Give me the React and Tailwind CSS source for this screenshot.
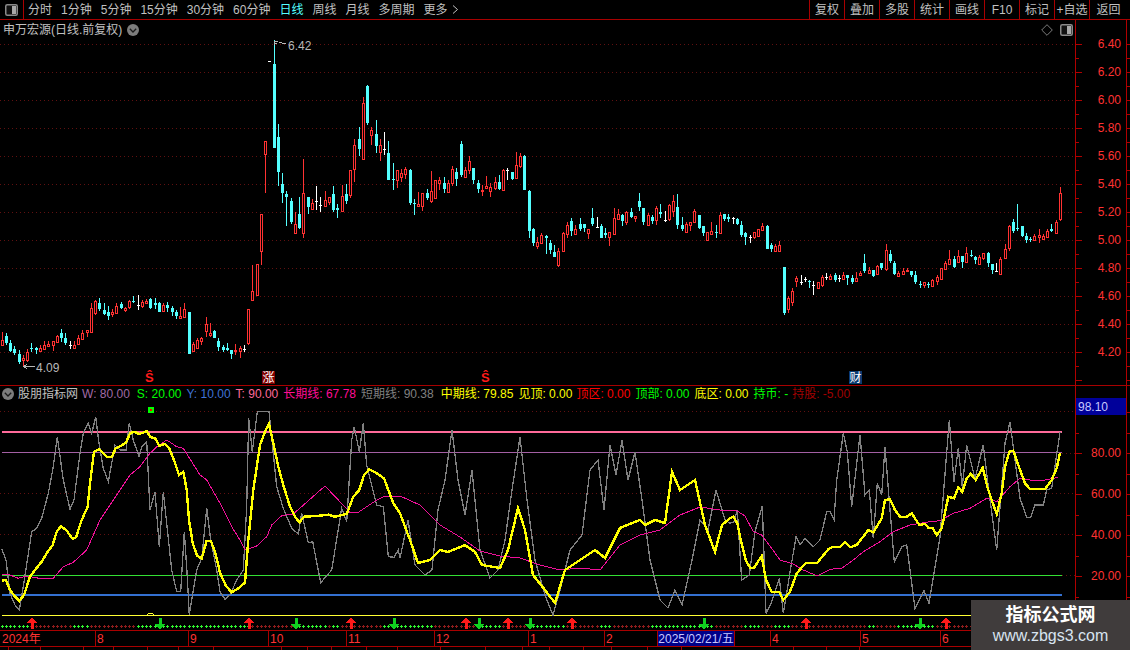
import React from "react";

const C = [
[340,345,332,345,0],[336,343,333,345,1],[343,351,340,352,1],[349,353,346,355,1],[354,362,350,364,1],[358,360,355,366,0],[352,360,349,362,0],[348,349,343,352,1],[348,350,347,354,1],[348,351,345,351,0],
[345,349,341,350,0],[344,346,341,346,0],[341,345,341,351,0],[336,342,335,343,0],[333,338,329,342,1],[338,343,333,345,1],[345,345,341,349,2],[345,348,341,348,0],[338,344,335,344,0],[333,339,330,339,0],
[330,332,330,337,0],[308,332,303,332,0],[301,313,300,315,0],[303,309,298,311,1],[310,314,303,315,1],[312,316,306,320,1],[312,314,309,317,0],[306,313,303,313,0],[304,308,302,309,1],[308,310,307,312,0],
[301,307,300,309,0],[301,302,296,303,1],[305,305,295,310,2],[302,306,300,308,0],[301,303,299,303,0],[299,308,298,309,1],[303,305,298,309,1],[303,312,302,312,1],[305,311,303,312,0],[305,308,302,312,1],
[308,312,306,316,1],[312,316,310,319,1],[316,318,307,318,0],[309,317,303,317,0],[312,354,312,354,1],[344,351,342,351,0],[340,348,338,348,0],[338,341,337,345,0],[324,331,317,337,0],[333,335,323,337,0],
[331,338,330,338,1],[341,347,338,351,1],[347,350,345,352,1],[348,350,343,351,1],[350,354,350,359,1],[350,351,344,355,0],[348,351,346,358,0],[349,349,345,352,2],[309,343,309,345,0],[291,300,265,300,0],
[264,295,264,296,0],[214,251,214,265,0],[141,154,141,193,0],[61,61,61,61,2],[64,148,40,148,1],[137,172,124,186,1],[184,193,173,203,1],[194,197,191,226,1],[201,222,198,224,1],[224,233,212,233,0],
[214,228,197,229,1],[193,233,159,238,0],[197,207,197,214,1],[203,209,199,210,0],[201,201,186,210,2],[205,205,197,212,2],[200,206,191,207,0],[197,202,197,205,0],[194,210,186,212,1],[208,210,204,218,1],
[196,211,185,211,0],[194,201,184,204,1],[170,195,170,198,0],[145,169,139,182,0],[139,149,127,156,1],[103,159,97,159,0],[86,123,85,125,1],[130,135,127,145,0],[134,146,120,153,1],[145,152,139,161,0],
[149,149,132,155,2],[153,180,141,180,1],[179,179,163,190,1],[170,180,170,188,0],[173,177,169,182,0],[169,174,167,179,0],[170,203,169,205,1],[203,204,199,215,1],[204,206,192,207,0],[193,206,193,211,0],
[193,198,189,200,1],[191,201,171,203,0],[180,198,180,198,0],[180,183,177,190,0],[183,189,177,193,1],[183,192,180,192,0],[169,183,166,186,0],[172,179,168,186,1],[144,175,141,177,1],[170,177,167,177,0],
[161,170,156,174,0],[168,180,168,184,1],[183,189,180,193,1],[190,191,185,196,0],[186,188,176,189,0],[187,191,183,197,0],[182,188,177,190,0],[182,189,175,190,1],[170,190,169,190,0],[170,170,168,180,2],
[172,179,172,180,1],[165,178,152,178,0],[156,166,153,168,0],[156,190,155,190,1],[191,231,190,238,1],[229,243,228,246,1],[242,246,237,249,0],[235,243,233,243,0],[236,238,235,254,1],[243,250,240,254,1],
[252,257,245,257,1],[251,265,248,267,0],[233,251,232,252,0],[225,234,222,238,0],[221,231,218,236,1],[229,234,225,235,0],[224,229,218,231,1],[224,228,224,232,1],[229,233,229,239,0],[218,224,208,226,1],
[227,227,217,228,2],[226,238,224,238,1],[233,235,228,238,1],[232,237,232,246,0],[218,234,208,235,0],[214,219,209,219,0],[215,221,214,226,1],[212,222,211,225,0],[212,217,208,218,1],[216,218,216,222,0],
[201,207,193,211,1],[208,222,208,225,1],[215,225,213,226,0],[217,221,215,224,1],[208,220,206,225,0],[212,214,204,218,1],[220,220,211,222,2],[205,219,204,221,0],[201,211,195,217,0],[207,225,194,229,1],
[225,229,217,231,1],[224,232,222,232,0],[222,225,222,231,0],[211,222,209,223,0],[215,228,215,229,1],[226,233,226,236,1],[232,240,232,240,0],[231,234,222,235,0],[232,232,225,238,1],[215,233,212,233,0],
[214,219,214,221,1],[217,219,214,222,1],[218,218,217,224,2],[219,224,218,225,1],[225,235,221,237,1],[233,237,232,245,1],[237,237,235,243,2],[232,237,232,239,0],[229,236,229,237,0],[226,230,223,230,0],
[226,249,225,249,1],[245,249,243,252,1],[246,251,244,251,0],[245,251,241,252,0],[267,313,267,315,1],[298,309,296,313,0],[291,302,288,306,0],[278,281,276,287,0],[282,282,275,285,2],[279,279,277,282,2],
[281,281,280,288,1],[285,285,281,295,2],[282,288,282,288,0],[277,285,275,287,0],[277,277,273,280,2],[276,279,274,279,0],[275,280,273,282,1],[278,278,275,282,2],[275,279,272,279,0],[275,278,275,285,1],
[278,282,275,284,1],[278,281,272,281,0],[273,275,271,275,0],[263,271,254,273,1],[270,273,267,274,0],[270,276,270,277,1],[266,274,265,275,0],[263,268,263,270,1],[250,269,244,271,0],[254,261,250,263,1],
[263,274,261,275,1],[273,276,271,276,0],[271,274,268,274,0],[270,271,268,272,0],[271,275,271,277,1],[275,282,271,284,1],[284,284,281,288,1],[282,285,282,288,0],[284,285,282,288,1],[280,286,279,287,0],
[277,281,275,285,0],[268,279,268,280,0],[263,269,261,270,0],[259,264,250,264,0],[259,267,256,268,1],[256,262,250,263,0],[256,262,256,268,1],[253,262,247,262,0],[255,256,250,257,1],[257,260,256,264,1],
[257,264,255,264,0],[253,258,253,260,0],[253,263,252,267,1],[264,270,264,274,1],[271,271,263,271,2],[259,274,257,274,0],[249,258,244,259,0],[226,248,225,251,0],[222,231,219,233,1],[228,229,204,231,1],
[226,236,226,237,1],[236,240,233,243,1],[239,240,237,242,1],[236,240,234,240,0],[235,237,229,243,0],[236,239,234,239,0],[231,237,229,237,0],[229,231,224,232,1],[222,233,220,233,0],[193,219,187,221,0],
];
const cx = (i) => 2 + Math.floor(4.25 * i);
const RED = "#ff3232", CY = "#54ffff";

function Candle({ d, i }) {
  const [t, b, h, l, k] = d;
  const x = cx(i);
  if (k === 2) return <g fill="#ffffff"><rect x={x} y={h} width="1" height={Math.max(1, l - h)} /><rect x={x - 1} y={t} width="3" height="1" /></g>;
  if (k === 1) return <g fill={CY}><rect x={x} y={h} width="1" height={Math.max(1, l - h)} /><rect x={x - 1} y={t} width="3" height={Math.max(1, b - t)} /></g>;
  return (
    <g>
      <rect x={x} y={h} width="1" height={Math.max(0, t - h)} fill={RED} />
      <rect x={x} y={b} width="1" height={Math.max(0, l - b)} fill={RED} />
      <rect x={x - 0.5} y={t + 0.5} width="2" height={Math.max(1, b - t)} fill="#000" stroke={RED} strokeWidth="1" />
    </g>
  );
}

const z10 = (a) => a.map(([x, y]) => [x / 3, 410 + y / 3]);
const z11 = (a) => a.map(([x, y]) => [730 + x / 3, 400 + y / 3]);
const yellow = [
  ...z10([[6,512],[18,510],[30,540],[45,560],[58,573],[72,555],[90,500],[105,480],[125,455],[140,430],[158,405],[170,365],[183,348],[200,362],[218,387],[228,382],[245,330],[263,290],[270,220],[282,125],[298,118],[322,141],[335,141],[347,115],[362,108],[378,98],[390,70],[402,65],[418,72],[440,64],[452,82],[465,84],[478,107],[495,102],[508,115],[522,150],[537,195],[550,185],[560,240],[567,330],[578,400],[592,438],[605,445],[620,392],[632,392],[645,425],[660,488],[678,528],[695,547],[715,535],[735,518],[745,390],[760,240],[780,105],[795,65],[807,42],[820,100],[835,170],[850,225],[870,290],[885,320],[898,337],[912,320],[950,318],[985,314],[1005,320],[1040,312],[1060,260],[1078,240],[1092,195],[1108,178],[1130,190],[1152,205],[1165,240],[1180,280],[1200,310]]),
  [410,540],[418,563],[430,560],[440,550],[448,552],[465,545],[475,552],[482,565],[500,568],[508,550],[518,508],[525,530],[533,575],[545,590],[555,603],[565,570],[580,560],[595,550],[605,558],[620,528],[640,520],[645,525],[655,520],[665,523],[672,472],[680,490],[695,480],[705,525],[715,552],[722,525],
  ...z11([[0,355],[10,350],[22,370],[32,420],[47,480],[60,503],[72,503],[95,468],[108,540],[125,575],[147,575],[160,600],[180,575],[200,520],[228,488],[262,488],[295,448],[308,440],[330,440],[345,427],[360,442],[380,435],[415,390],[430,397],[455,355],[465,300],[480,298],[495,330],[510,350],[530,350],[545,340],[568,375],[585,372],[595,383],[607,383],[620,405],[635,385],[655,290],[672,295],[685,262],[697,275],[710,235],[722,222],[737,240],[758,203],[772,260],[785,300],[800,342],[815,280],[825,200],[838,155],[850,152],[865,195],[885,250],[900,267],[945,267],[965,240],[980,205],[990,158]]),
];
const pink = [
  ...z10([[6,493],[30,495],[55,505],[80,498],[100,502],[130,507],[160,505],[190,470],[220,457],[260,420],[300,330],[340,270],[390,195],[420,170],[450,130],[470,110],[500,90],[530,110],[550,115],[600,195],[620,210],[660,280],[695,350],[720,390],[735,420],[770,408],[800,380],[815,345],[845,317],[880,312],[975,228],[1010,265],[1050,307],[1075,307],[1130,270],[1155,258],[1200,258]]),
  [420,505],[440,525],[460,537],[480,551],[500,556],[520,558],[540,565],[560,570],[580,568],[600,570],[620,545],[640,535],[660,530],[680,515],[700,507],[720,510],
  ...z11([[0,330],[20,332],[45,348],[70,395],[95,405],[125,445],[150,480],[190,492],[220,510],[262,528],[300,508],[335,505],[370,480],[400,455],[450,425],[490,395],[540,375],[600,365],[630,362],[670,340],[720,325],[770,295],[800,305],[840,260],[870,235],[900,240],[945,240],[985,232]]),
];
const gray = [
  ...z10([[6,418],[18,450],[30,550],[45,585],[58,600],[70,530],[95,365],[110,355],[125,325],[145,250],[160,170],[172,80],[190,210],[210,298],[222,270],[240,130],[250,70],[265,40],[275,70],[287,22],[297,100],[310,175],[325,215],[345,105],[360,120],[378,120],[388,40],[400,90],[417,140],[425,110],[440,95],[450,300],[465,245],[478,410],[490,245],[515,480],[530,545],[542,545],[553,365],[562,500],[568,615],[575,570],[590,480],[605,445],[620,295],[632,390],[650,480],[660,545],[675,568],[690,555],[710,510],[730,480],[740,290],[746,25],[757,125],[772,5],[807,5],[820,130],[830,230],[850,295],[875,355],[895,372],[905,310],[925,398],[938,395],[962,518],[995,480],[1025,295],[1040,335],[1055,90],[1063,50],[1078,125],[1090,40],[1100,165],[1130,285],[1150,290],[1165,440],[1182,442],[1195,420],[1200,445]]),
  [408,520],[415,565],[425,575],[432,570],[438,510],[445,480],[452,430],[458,480],[465,515],[472,470],[480,550],[490,578],[498,570],[505,540],[512,490],[520,437],[527,500],[535,560],[545,595],[553,615],[560,590],[570,550],[582,535],[590,470],[598,460],[604,510],[610,445],[616,475],[622,440],[628,480],[635,452],[642,500],[650,560],[660,600],[668,608],[675,590],[682,605],[692,560],[700,520],[708,530],[716,490],[725,520],
  ...z11([[0,370],[12,365],[22,330],[35,540],[58,525],[75,395],[97,318],[108,640],[125,605],[148,535],[160,640],[178,530],[198,410],[210,435],[225,415],[250,440],[270,420],[290,335],[300,335],[312,360],[320,240],[340,100],[352,155],[365,320],[390,105],[405,285],[418,270],[430,415],[442,250],[455,285],[465,140],[480,330],[493,485],[515,440],[530,435],[555,625],[582,572],[597,610],[630,410],[658,60],[672,245],[685,145],[697,260],[710,135],[735,235],[760,135],[775,260],[800,450],[825,130],[840,65],[870,295],[890,352],[902,352],[915,315],[940,315],[950,270],[965,265],[990,97]]),
];
const toPts = (a) => a.map(([x, y]) => `${x.toFixed(1)},${y.toFixed(1)}`).join(" ");

const greenRanges = [[0,30],[73,91],[137,249],[296,327],[332,339],[384,434],[479,500],[530,565],[600,611],[650,716],[745,762],[775,790],[865,875],[895,934],[1010,1062]];
const isGreen = (x) => greenRanges.some(([a, b]) => x >= a && x < b);
const upArrows = [32, 249, 351, 466, 508, 572, 806, 946];
const downArrows = [160, 296, 394, 479, 530, 704, 920];

const DOT = "#601010";
const range = (a, b, s) => { const r = []; for (let v = a; v <= b; v += s) r.push(v); return r; };

function MainChart() {
  return (
    <svg width="1075" height="346" viewBox="0 39 1075 346" className="block" shapeRendering="crispEdges">
      {range(44, 352, 28).map((y) => <line key={y} x1="0" x2="1075" y1={y + 0.5} y2={y + 0.5} stroke={DOT} strokeDasharray="1 3" />)}
      {C.map((d, i) => <Candle key={i} d={d} i={i} />)}
      <path d="M274.5 45V41.5H278M275 43.5H277M279 42.5L281 42L283 43.5L285.5 43" stroke="#b8b8b8" fill="none" />
      <path d="M35 366.5H24M27 364L24 366.5L27 369" stroke="#b8b8b8" fill="none" />
    </svg>
  );
}

function IndicatorChart() {
  return (
    <svg width="1075" height="228" viewBox="0 402 1075 228" className="block" shapeRendering="crispEdges">
      {[411, 493, 534].map((y) => <line key={y} x1="0" x2="1075" y1={y + 0.5} y2={y + 0.5} stroke={DOT} strokeDasharray="1 3" />)}
      {[453, 575].map((y) => <line key={y} x1="1062" x2="1075" y1={y + 0.5} y2={y + 0.5} stroke={DOT} strokeDasharray="1 3" />)}
      <rect x="2" y="431" width="1060" height="2" fill="#ff6a9a" />
      <rect x="2" y="452" width="1060" height="1" fill="#a45fa4" />
      <rect x="2" y="575" width="1060" height="1" fill="#33e033" />
      <rect x="2" y="594" width="1060" height="2" fill="#3470d0" />
      <rect x="2" y="615" width="1128" height="1" fill="#ffff33" />
      <polyline points={toPts(gray)} fill="none" stroke="#808080" strokeWidth="1.3" />
      <polyline points={toPts(pink)} fill="none" stroke="#f0109a" strokeWidth="1" />
      <polyline points={toPts(yellow)} fill="none" stroke="#ffff00" strokeWidth="2.4" />
      <rect x="148" y="407" width="6" height="6" fill="#00ff00" />
      <rect x="150" y="409" width="2" height="2" fill="#ff0000" />
      <path d="M147 615L149 613H152L154 615" fill="none" stroke="#ffff33" />
      {C.map((_, i) => {
        const x = cx(i);
        const g = isGreen(x);
        return <path key={i} d={`M${x - 1} 626.5H${x + 2}M${x} 625.5H${x + 1}M${x} 627.5H${x + 1}`} stroke={g ? "#30f030" : "#8e1c1c"} />;
      })}
      {upArrows.map((x) => <path key={x} d={`M${x - 5} 623L${x} 617L${x + 5} 623H${x + 2}V629H${x - 1}V623Z`} fill="#ff1a1a" />)}
      {downArrows.map((x) => <path key={x} d={`M${x - 1} 618H${x + 2}V624H${x + 5}L${x} 630L${x - 5} 624H${x - 1}Z`} fill="#10d020" />)}
    </svg>
  );
}

function PanelIcon({ className }) {
  return (
    <svg width="13" height="12" viewBox="0 0 13 12" className={className}>
      <rect x="0.75" y="0.75" width="11.5" height="10.5" rx="1.5" fill="#111" stroke="#8a8a8a" strokeWidth="1.5" />
      <rect x="7" y="2" width="4" height="8" fill="#a8a8a8" />
    </svg>
  );
}

function DownCircle({ className }) {
  return (
    <svg width="12" height="12" viewBox="0 0 12 12" className={className}>
      <circle cx="6" cy="6" r="6" fill="#7c7c7c" />
      <path d="M2.8 4.8L6 8L9.2 4.8" fill="none" stroke="#1a1a1a" strokeWidth="1.3" />
    </svg>
  );
}

const periods = [["分时"],["1分钟"],["5分钟"],["15分钟"],["30分钟"],["60分钟"],["日线",1],["周线"],["月线"],["多周期"],["更多"]];
const tools = ["复权","叠加","多股","统计","画线","F10","标记","+自选"];
const legend = [
  ["W: 80.00","text-[#a26aa6]"],["S: 20.00","ml-[2px] text-[#00ff00]"],["Y: 10.00","text-[#3f73d8]"],["T: 90.00","text-[#ff6a9a]"],
  ["长期线: 67.78","text-[#ff0d96]"],["短期线: 90.38","text-[#808080]"],["中期线: 79.85","ml-[2px] text-[#ffff00]"],["见顶: 0.00","text-[#ffff00]"],
  ["顶区: 0.00","-ml-[1px] text-[#ff0000]"],["顶部: 0.00","text-[#00ff00]"],["底区: 0.00","text-[#ffff00]"],["持币: -","text-[#00ff00]"],["持股: -5.00","-ml-[1px] text-[#a00000]"],
];
const priceLabels = ["6.40","6.20","6.00","5.80","5.60","5.40","5.20","5.00","4.80","4.60","4.40","4.20"];
const footerCuts = [42,73,115,144,177,207,241,308,333,356,390,420,462,506,542,568,601,628,663,696,807,839,871];

function AxisRuler({ height, top, step, majorEvery }) {
  const ys = range(top, height, step);
  return (
    <svg width="55" height={height} viewBox={`0 0 55 ${height}`} className="absolute left-0 top-0" shapeRendering="crispEdges">
      <rect x="0" y="0" width="1" height={height} fill="#b00000" />
      <rect x="51" y="0" width="1" height={height} fill="#b00000" />
      {ys.map((y, i) => (
        <g key={y} fill="#b00000">
          <rect x="1" y={y} width={i % majorEvery === 0 ? 6 : 3} height="1" />
          <rect x="52" y={y} width="3" height="1" />
        </g>
      ))}
    </svg>
  );
}

export default function App() {
  return (
    <div className="relative w-[1130px] h-[650px] overflow-hidden bg-black text-[12px] leading-none text-[#c0c0c0] font-['Liberation_Sans','Noto_Sans_CJK_SC',sans-serif]">
      {/* toolbar */}
      <div className="flex h-[20px] items-center border-b border-[#a80000]">
        <div className="flex h-full w-[24px] items-center justify-center border-r border-[#a80000]">
          <PanelIcon className="mr-[1px]" />
        </div>
        <div className="ml-[4px] flex items-center gap-[9px]">
          {periods.map(([t, on]) => (
            <span key={t} className={on ? "text-[#54ffff]" : ""}>{t}</span>
          ))}
          <svg width="7" height="9" viewBox="0 0 7 9" className="-ml-[5px]"><path d="M1 .5L5.5 4.5L1 8.5" fill="none" stroke="#c0c0c0" /></svg>
        </div>
        <div className="ml-auto flex h-full">
          {tools.map((t) => (
            <div key={t} className="flex h-full w-[35px] items-center justify-center border-l border-[#a80000]">{t}</div>
          ))}
          <div className="flex h-full w-[41px] items-center justify-center border-l border-[#a80000] pr-[3px]">返回</div>
        </div>
      </div>

      {/* price panel */}
      <div className="flex h-[366px] border-b border-[#a80000]">
        <div className="relative w-[1075px]">
          <div className="flex h-[19px] items-center pl-[3px]">
            <span>申万宏源(日线.前复权)</span>
            <DownCircle className="ml-[5px]" />
            <div className="ml-auto mr-[2px] flex items-center gap-[7px]">
              <svg width="12" height="12" viewBox="0 0 12 12"><path d="M6 .7L11.3 6L6 11.3L.7 6Z" fill="none" stroke="#7c7c7c" /></svg>
              <PanelIcon />
            </div>
          </div>
          <MainChart />
          <span className="absolute left-[288px] top-[20px] text-[#b8b8b8]">6.42</span>
          <span className="absolute left-[36px] top-[342px] text-[#b8b8b8]">4.09</span>
          <span className="absolute left-[145px] top-[351px] text-[13px] font-bold text-[#ff1a1a]">Ŝ</span>
          <span className="absolute left-[481px] top-[351px] text-[13px] font-bold text-[#ff1a1a]">Ŝ</span>
          <span className="absolute left-[262px] top-[351px] flex h-[13px] w-[13px] items-center justify-center bg-[#800000] text-white">涨</span>
          <span className="absolute left-[849px] top-[351px] flex h-[13px] w-[13px] items-center justify-center bg-[#0a3a70] text-white">财</span>
        </div>
        <div className="relative w-[55px] pt-[10px]">
          <AxisRuler height={365} top={24} step={14} majorEvery={2} />
          {priceLabels.map((p) => (
            <div key={p} className="relative h-[28px] w-[51px] pr-[5px] text-right leading-[28px] text-[#ff3232]">{p}</div>
          ))}
        </div>
      </div>

      {/* indicator panel */}
      <div className="flex h-[244px]">
        <div className="w-[1075px]">
          <div className="flex h-[16px] items-center pl-[2px]">
            <DownCircle />
            <span className="ml-[4px] mr-[4px]">股朋指标网</span>
            <div className="flex items-center gap-[5px] whitespace-pre">
              {legend.map(([t, c]) => <span key={t} className={c}>{t}</span>)}
            </div>
          </div>
          <IndicatorChart />
        </div>
        <div className="relative w-[55px] pt-[47px]">
          <AxisRuler height={244} top={26} step={20.5} majorEvery={2} />
          {["80.00","60.00","40.00","20.00"].map((p) => (
            <div key={p} className="relative h-[41px] w-[51px] pr-[5px] text-right leading-[41px] text-[#ff3232]">{p}</div>
          ))}
          <div className="absolute left-[1px] top-[12px] flex h-[17px] w-[50px] items-center bg-[#00009a] pl-[2px] text-[#c8c8ff]">98.10</div>
        </div>
      </div>

      {/* date axis */}
      <div className="relative flex h-[17px] items-stretch border-y border-[#a80000] text-[#ff3232]">
        {[["2024年",95],["8",93],["9",80],["10",78],["11",88],["12",94],["1",76],["2",53]].map(([t, w]) => (
          <div key={t} style={{ width: w }} className="flex items-center border-l border-[#a80000] pl-[1px] first:border-l-0 first:pl-[2px]">{t}</div>
        ))}
        <div className="flex w-[78px] items-center justify-center whitespace-nowrap border-x border-[#a80000] bg-[#000088] text-[#c8c8ff]">2025/02/21/五</div>
        <div className="w-[35px]" />
        {[["4",90],["5",80],["6",190]].map(([t, w]) => (
          <div key={t} style={{ width: w }} className="flex items-center border-l border-[#a80000] pl-[1px]">{t}</div>
        ))}
      </div>

      {/* status remnants */}
      <div className="flex h-[3px]">
        {footerCuts.map((w, i) => (
          <div key={i} style={{ marginLeft: i === 0 ? 8 : (footerCuts[i] - footerCuts[i - 1]) }} className="h-full w-[1px] shrink-0 bg-[#a80000]" />
        ))}
      </div>

      {/* watermark */}
      <div className="absolute bottom-0 right-0 flex h-[50px] w-[159px] flex-col items-center justify-center bg-[#403c3c]">
        <div className="text-[18px] font-bold leading-[22px] text-white">指标公式网</div>
        <div className="text-[16px] leading-[20px] text-[#d8e4f0]">www.zbgs3.com</div>
      </div>
    </div>
  );
}
